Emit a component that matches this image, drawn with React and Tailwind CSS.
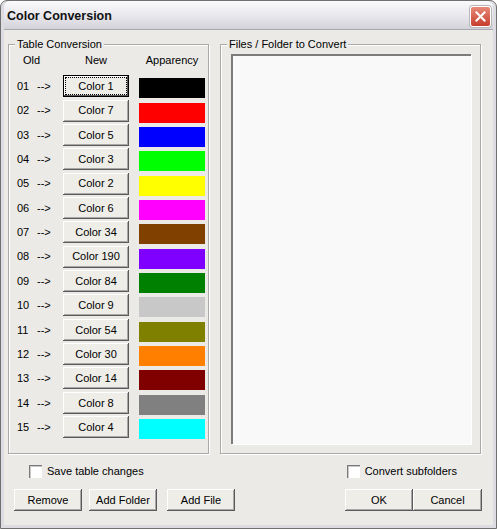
import React from "react";

const rows = [
  ["01", "Color 1", "#000000"],
  ["02", "Color 7", "#ff0000"],
  ["03", "Color 5", "#0000ff"],
  ["04", "Color 3", "#00ff00"],
  ["05", "Color 2", "#ffff00"],
  ["06", "Color 6", "#ff00ff"],
  ["07", "Color 34", "#804000"],
  ["08", "Color 190", "#8000ff"],
  ["09", "Color 84", "#008000"],
  ["10", "Color 9", "#c8c8c8"],
  ["11", "Color 54", "#808000"],
  ["12", "Color 30", "#ff8000"],
  ["13", "Color 14", "#800000"],
  ["14", "Color 8", "#808080"],
  ["15", "Color 4", "#00ffff"],
];

function Btn({ children, focused, className = "" }) {
  if (focused) {
    return (
      <button className={"h-[22px] bg-[#eeede8] border border-black p-[1px] shadow-[inset_-1px_-1px_#5a5a5a,inset_1px_1px_#ffffff] " + className}>
        <span className="flex h-full w-full items-center justify-center border border-dotted border-black">
          {children}
        </span>
      </button>
    );
  }
  return (
    <button className={"h-[22px] bg-[#eeede8] flex items-center justify-center shadow-[inset_-1px_-1px_#5a5a5a,inset_1px_1px_#ffffff,inset_-2px_-2px_#a8a8a8] " + className}>
      {children}
    </button>
  );
}

function Group({ label, className = "", children }) {
  return (
    <div className={"relative border border-[#a9a9a9] shadow-[inset_1px_1px_#ffffff,1px_1px_#ffffff] " + className}>
      <span className="absolute left-[6px] top-[-8px] bg-[#ebeae7] px-[2px] leading-[14px]">{label}</span>
      {children}
    </div>
  );
}

function Check({ label, className = "" }) {
  return (
    <div className={"flex items-center gap-[5px] " + className}>
      <span className="block w-[13px] h-[13px] bg-white border-t border-l border-[#7a7a7a] shadow-[inset_1px_1px_#c8c8c8]" />
      <span>{label}</span>
    </div>
  );
}

export default function App() {
  return (
    <div
      className="w-[497px] h-[529px] bg-white text-[11px] text-black"
      style={{ fontFamily: '"Liberation Sans", Arial, sans-serif' }}
    >
      <div className="flex h-full w-full flex-col rounded-t-[7px] border border-[#707070] bg-[#dcdce2] px-[3px] pb-[3px]">
        {/* title bar */}
        <div className="flex h-[28px] items-center justify-between rounded-t-[6px] bg-gradient-to-b from-[#fafafc] via-[#e9e9ee] to-[#d2d2d9] pl-[3px] pr-[2px] pt-[3px]">
          <span className="text-[12.5px] font-bold text-[#111]">Color Conversion</span>
          <span className="flex h-[21px] w-[21px] items-center justify-center rounded-[3px] border border-white bg-gradient-to-b from-[#e88a78] to-[#c63b2c] shadow-[0_0_0_1px_#b8b8b8]">
            <svg width="11" height="11" viewBox="0 0 11 11">
              <path d="M1.5 1.5 L9.5 9.5 M9.5 1.5 L1.5 9.5" stroke="white" strokeWidth="2" strokeLinecap="square" />
            </svg>
          </span>
        </div>

        {/* body */}
        <div className="flex-1 border-t border-[#a8a8b0] bg-[#ebeae7] pl-[4px] pt-[14px]">
          <div className="flex gap-[11px]">
            <Group label="Table Conversion" className="w-[201px] h-[410px]">
              <div className="pl-[8px] pt-[7px]">
                <div className="grid h-[22px] grid-cols-[20px_26px_66px_10px_66px] leading-[16px]">
                  <span className="col-span-2 pl-[6px]">Old</span>
                  <span className="text-center">New</span>
                  <span />
                  <span className="text-center">Apparency</span>
                </div>
                {rows.map(([n, c, col], i) => (
                  <div key={n} className="grid h-[24.36px] grid-cols-[20px_26px_66px_10px_66px] items-center">
                    <span>{n}</span>
                    <span>--&gt;</span>
                    <Btn focused={i === 0} className="w-[66px]">{c}</Btn>
                    <span />
                    <span className="mt-[4px] block h-[20px] w-[66px]" style={{ backgroundColor: col }} />
                  </div>
                ))}
              </div>
            </Group>

            <Group label="Files / Folder to Convert" className="w-[261px] h-[410px]">
              <div className="pl-[10px] pt-[9px]">
                <div className="h-[390px] w-[240px] bg-[#f9f9f9] border-t-2 border-l-2 border-[#7c7c7c] shadow-[1px_1px_#ffffff]" />
              </div>
            </Group>
          </div>

          <div className="mt-[10px] flex h-[14px] items-center">
            <Check label="Save table changes" className="ml-[21px]" />
            <Check label="Convert subfolders" className="ml-[203px]" />
          </div>

          <div className="mt-[11px] flex">
            <Btn className="ml-[6px] w-[68px]">Remove</Btn>
            <Btn className="ml-[7px] w-[68px]">Add Folder</Btn>
            <Btn className="ml-[10px] w-[68px]">Add File</Btn>
            <Btn className="ml-[110px] w-[68px]">OK</Btn>
            <Btn className="w-[69px]">Cancel</Btn>
          </div>
        </div>
      </div>
    </div>
  );
}
